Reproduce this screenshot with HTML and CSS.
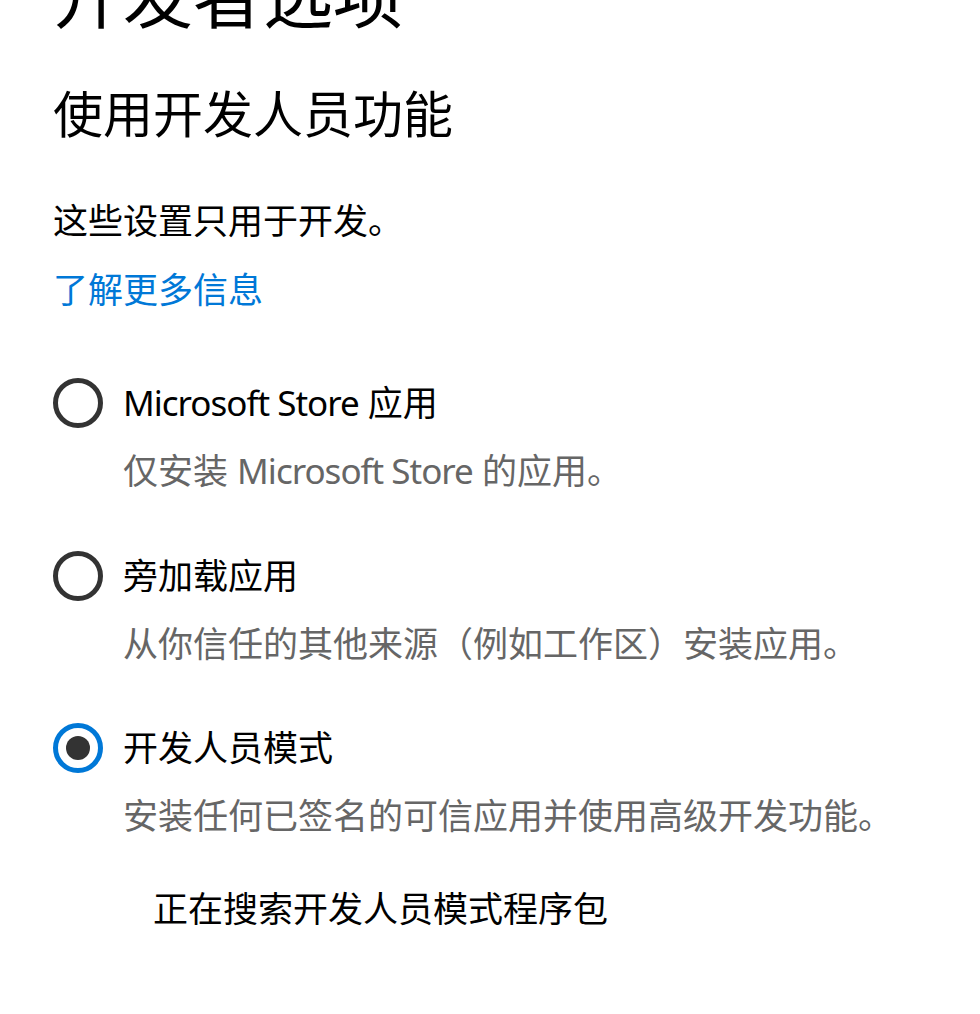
FILE: index.html
```html
<!DOCTYPE html>
<html lang="zh-CN">
<head>
  <meta charset="UTF-8" />
  <meta name="viewport" content="width=device-width, initial-scale=1.0" />
  <title>开发者选项</title>
  <link rel="stylesheet" href="styles.css">
</head>
<body>
  <div class="page">
    <h1 class="page-title">开发者选项</h1>
    <h2 class="section-title">使用开发人员功能</h2>
    <p class="intro">这些设置只用于开发。</p>
    <a class="more-link" href="#">了解更多信息</a>

    <div class="options">
      <div class="option">
        <div class="radio-row">
          <span class="radio"></span>
          <span class="radio-label"><span class="latin">Microsoft Store</span> 应用</span>
        </div>
        <p class="option-desc">仅安装 <span class="latin">Microsoft Store</span> 的应用。</p>
      </div>

      <div class="option">
        <div class="radio-row">
          <span class="radio"></span>
          <span class="radio-label">旁加载应用</span>
        </div>
        <p class="option-desc">从你信任的其他来源（例如工作区）安装应用。</p>
      </div>

      <div class="option">
        <div class="radio-row">
          <span class="radio checked"></span>
          <span class="radio-label">开发人员模式</span>
        </div>
        <p class="option-desc">安装任何已签名的可信应用并使用高级开发功能。</p>
      </div>
    </div>

    <p class="status">正在搜索开发人员模式程序包</p>
  </div>
</body>
</html>
```

FILE: styles.css
```css
body {
  margin: 0;
  padding: 0;
  background: #fff;
  color: #000;
  font-family: "Noto Sans", "Noto Sans CJK SC", sans-serif;
}
.page {
  padding: 0 0 40px 53px;
}
.page-title {
  margin: -39px 0 0;
  font-size: 70px;
  font-weight: normal;
  line-height: 70px;
}
.section-title {
  margin: 58px 0 0;
  font-size: 50px;
  font-weight: normal;
  line-height: 50px;
}
.intro {
  margin: 63px 0 0;
  font-size: 35px;
  line-height: 37.5px;
}
.more-link {
  display: block;
  margin-top: 31px;
  font-size: 35px;
  line-height: 37.5px;
  color: #0078d7;
  text-decoration: none;
}
.options {
  margin-top: 70px;
  display: flex;
  flex-direction: column;
  gap: 61px;
}
.radio-row {
  display: flex;
  align-items: center;
  gap: 20px;
  height: 50px;
}
.radio {
  box-sizing: border-box;
  width: 50px;
  height: 50px;
  border: 5px solid #333;
  border-radius: 50%;
  display: flex;
  align-items: center;
  justify-content: center;
  flex-shrink: 0;
}
.radio.checked {
  border-color: #0078d7;
}
.radio.checked::after {
  content: "";
  width: 24px;
  height: 24px;
  border-radius: 50%;
  background: #333;
}
.radio-label {
  font-size: 35px;
  line-height: 50px;
}
.latin {
  letter-spacing: -1px;
}
.option-desc {
  margin: 24px 0 0 70px;
  font-size: 35px;
  line-height: 37.5px;
  color: #666;
}
.status {
  margin: 55px 0 0 100px;
  font-size: 35px;
  line-height: 37.5px;
}
```
